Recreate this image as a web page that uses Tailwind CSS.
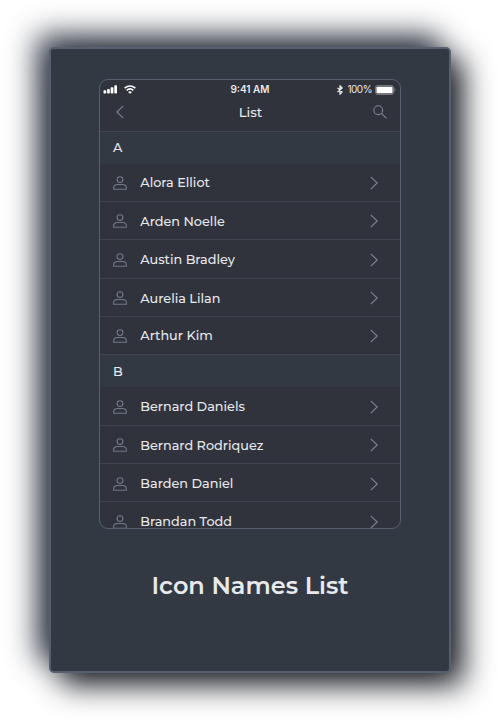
<!DOCTYPE html>
<html lang="en">
<head>
<meta charset="utf-8">
<title>Icon Names List</title>
<script src="https://cdn.jsdelivr.net/npm/@tailwindcss/browser@4"></script>
</head>
<body class="h-[720px] overflow-hidden bg-white pl-[49px] pt-[47px] font-[Montserrat,Inter,sans-serif] text-[#e7e9ec]">
<svg class="hidden">
  <symbol id="user" viewBox="0 0 14 14"><g fill="none" stroke="#727a8c" stroke-width="1.100"><circle cx="7" cy="3.6" r="2.9"/><path d="M.7 13.2v-1.5C.7 9.4 2.5 8.500 4.500 8.500h5c2 0 3.800.9 3.800 3.200v1.500z"/></g></symbol>
  <symbol id="next" viewBox="0 0 8 14"><path d="M.8.8 7.200 7 .8 13.200" fill="none" stroke="#7e8598" stroke-width="1.100"/></symbol>
</svg>
<main class="flex h-[626px] w-[402px] flex-col items-center rounded-[5px] border-2 border-[#566071] bg-[#333943] pt-[30px] shadow-[12px_12px_30px_#1c1f25,-12px_-12px_30px_#363c4a]">
  <section class="h-[450px] w-[302px] shrink-0 overflow-hidden rounded-[9px] border border-[#566071] bg-[#30333c]">
    <header class="h-[51.500px] border-b border-[#40444f]">
      <div class="grid h-[19px] grid-cols-3 items-center pl-[3px] pr-[4px] font-[Inter,sans-serif] text-[10px]">
        <div class="flex items-center gap-[5.500px]">
          <svg class="h-[9px] w-[15px]" viewBox="0 0 15 9" fill="#fff"><rect x="0.500" y="5.200" width="2.700" height="3.300" rx=".7"/><rect x="4.100" y="4" width="2.700" height="4.500" rx=".7"/><rect x="7.700" y="2.300" width="2.700" height="6.200" rx=".7"/><rect x="11.300" y=".3" width="2.700" height="8.200" rx=".7"/></svg>
          <svg class="h-[9px] w-[12px]" viewBox="0 0 12 9" fill="none" stroke="#fff" stroke-width="1.500"><path d="M.6 3.200Q6-1.300 11.400 3.200M2.600 5.300Q6 2.500 9.400 5.300"/><path d="M4 6.900Q6 5.400 8 6.900L6 8.800z" fill="#fff" stroke="none"/></svg>
        </div>
        <div class="pl-px text-center font-semibold">9:41 AM</div>
        <div class="flex items-center justify-end">
          <svg class="mr-[4px] h-[10px] w-[6px]" viewBox="0 0 6 10"><path d="M.5 2.800 5.300 7 3 9.200V.8l2.300 2.200L.5 7.200" fill="none" stroke="#fff" stroke-width="1.100"/></svg>
          <span class="mr-[3px] tracking-[-0.500px]">100%</span>
          <svg class="h-[10px] w-[21px]" viewBox="0 0 21 10"><rect x=".5" y=".5" width="18" height="9" rx="2" fill="#454850" stroke="#777a80"/><rect x="1.500" y="1.800" width="16" height="6.500" rx=".7" fill="#fff"/><path d="M19.700 3.500q1 1.500 0 3z" fill="#777a80" stroke="#777a80" stroke-width=".5"/></svg>
        </div>
      </div>
      <div class="flex h-[26px] items-center justify-between pl-[16px] pr-[13px]">
        <svg class="h-[14px] w-[8px]" viewBox="0 0 8 14"><path d="M7.300.8.9 7l6.400 6.200" fill="none" stroke="#7e8598" stroke-width="1.100"/></svg>
        <h1 class="pl-[4px] pt-[2px] text-[13.200px] font-medium">List</h1>
        <svg class="h-[14px] w-[14px]" viewBox="0 0 14 14" fill="none" stroke="#7e8598" stroke-width="1.100"><circle cx="5.200" cy="5.200" r="4.400"/><path d="m8.400 8.400 5 5"/></svg>
      </div>
    </header>
    <h2 class="flex h-[32.200px] items-center bg-[#333943] pl-[13px] text-[12.800px] font-medium">A</h2>
    <ul class="text-[12.800px] font-medium">
      <li class="flex h-[38.300px] items-center border-b border-[#40444f] pl-[13px] pr-[22px] pt-px"><svg class="mr-[13.300px] size-[14px]"><use href="#user"/></svg><span class="grow">Alora Elliot</span><svg class="h-[14px] w-[8px]"><use href="#next"/></svg></li>
      <li class="flex h-[38.300px] items-center border-b border-[#40444f] pl-[13px] pr-[22px] pt-px"><svg class="mr-[13.300px] size-[14px]"><use href="#user"/></svg><span class="grow">Arden Noelle</span><svg class="h-[14px] w-[8px]"><use href="#next"/></svg></li>
      <li class="flex h-[38.300px] items-center border-b border-[#40444f] pl-[13px] pr-[22px] pt-[2px]"><svg class="mr-[13.300px] size-[14px]"><use href="#user"/></svg><span class="grow">Austin Bradley</span><svg class="h-[14px] w-[8px]"><use href="#next"/></svg></li>
      <li class="flex h-[38.300px] items-center border-b border-[#40444f] pl-[13px] pr-[22px] pt-[2px]"><svg class="mr-[13.300px] size-[14px]"><use href="#user"/></svg><span class="grow">Aurelia Lilan</span><svg class="h-[14px] w-[8px]"><use href="#next"/></svg></li>
      <li class="flex h-[38.300px] items-center border-b border-[#40444f] pl-[13px] pr-[22px] pt-px"><svg class="mr-[13.300px] size-[14px]"><use href="#user"/></svg><span class="grow">Arthur Kim</span><svg class="h-[14px] w-[8px]"><use href="#next"/></svg></li>
    </ul>
    <h2 class="flex h-[32.200px] items-center bg-[#333943] pl-[13px] text-[12.800px] font-medium">B</h2>
    <ul class="text-[12.800px] font-medium">
      <li class="flex h-[38.300px] items-center border-b border-[#40444f] pl-[13px] pr-[22px] pt-[2px]"><svg class="mr-[13.300px] size-[14px]"><use href="#user"/></svg><span class="grow">Bernard Daniels</span><svg class="h-[14px] w-[8px]"><use href="#next"/></svg></li>
      <li class="flex h-[38.300px] items-center border-b border-[#40444f] pl-[13px] pr-[22px] pt-[2px]"><svg class="mr-[13.300px] size-[14px]"><use href="#user"/></svg><span class="grow">Bernard Rodriquez</span><svg class="h-[14px] w-[8px]"><use href="#next"/></svg></li>
      <li class="flex h-[38.300px] items-center border-b border-[#40444f] pl-[13px] pr-[22px] pt-[2px]"><svg class="mr-[13.300px] size-[14px]"><use href="#user"/></svg><span class="grow">Barden Daniel</span><svg class="h-[14px] w-[8px]"><use href="#next"/></svg></li>
      <li class="flex h-[38.300px] items-center border-b border-[#40444f] pl-[13px] pr-[22px] pt-[2px]"><svg class="mr-[13.300px] size-[14px]"><use href="#user"/></svg><span class="grow">Brandan Todd</span><svg class="h-[14px] w-[8px]"><use href="#next"/></svg></li>
    </ul>
  </section>
  <p class="mt-[39px] text-[24px] font-semibold leading-9">Icon Names List</p>
</main>
</body>
</html>
